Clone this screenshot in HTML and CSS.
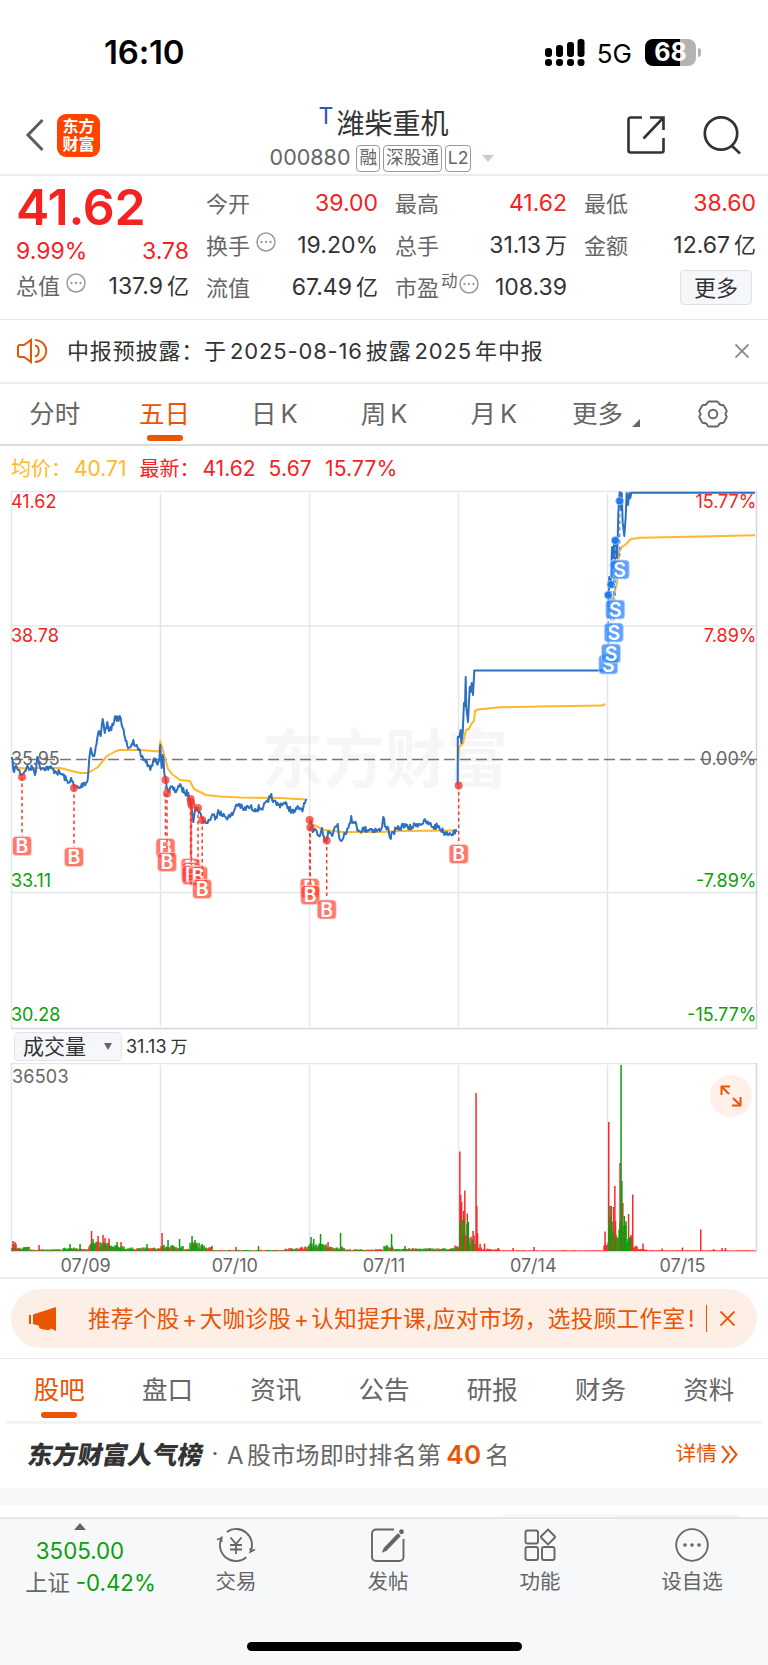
FILE: index.html
```html
<!DOCTYPE html>
<html lang="zh-CN">
<head>
    <meta charset="UTF-8">
    <meta name="viewport" content="width=device-width, initial-scale=1.0">
    <title>潍柴重机 000880</title>
    <link rel="stylesheet" href="styles.css">
</head>
<body>
    <div class="status-bar">
        <span class="clock">16:10</span>
        <div class="status-icons">
            <svg class="signal" width="40" height="28" viewBox="0 0 40 28">
                <rect x="0" y="9" width="7" height="9" rx="3"/>
                <rect x="11" y="6" width="7" height="12" rx="3"/>
                <rect x="22" y="3" width="7" height="15" rx="3"/>
                <rect x="32.500" y="0" width="7" height="18" rx="3"/>
                <rect x="0" y="20" width="7" height="7" rx="3"/>
                <rect x="11" y="20" width="7" height="7" rx="3"/>
                <rect x="22" y="20" width="7" height="7" rx="3"/>
                <rect x="32.500" y="20" width="7" height="7" rx="3"/>
            </svg>
            <span class="network">5G</span>
            <span class="battery">68</span>
            <span class="battery-nub"></span>
        </div>
    </div>

    <header class="header">
        <div class="header-left">
            <svg width="20" height="34" viewBox="0 0 20 34" fill="none" stroke="#5c5c5c" stroke-width="3"><path d="M17.500 2 3 17l14.500 15"/></svg>
            <div class="logo"><span>东方</span><span>财富</span></div>
        </div>
        <div class="header-title">
            <div class="stock-name"><sup>T</sup>潍柴重机</div>
            <div class="stock-code">
                <span class="code">000880</span>
                <span class="tag">融</span>
                <span class="tag">深股通</span>
                <span class="tag">L2</span>
                <i class="caret"></i>
            </div>
        </div>
        <div class="header-right">
            <svg width="40" height="40" viewBox="0 0 40 40" fill="none" stroke="#333" stroke-width="2.600"><path d="M16 2.500H4.500a2 2 0 0 0-2 2v31a2 2 0 0 0 2 2h31a2 2 0 0 0 2-2V23M24 2.500h13.500V15M37 3 17.500 23.500"/></svg>
            <svg width="40" height="40" viewBox="0 0 40 40" fill="none" stroke="#333" stroke-width="2.700"><circle cx="19" cy="18.500" r="16.200"/><path d="m29.500 30.500 8.500 8"/></svg>
        </div>
    </header>

    <section class="quote">
        <div class="quote-main">
            <div class="price">41.62</div>
            <div class="cell up"><span>9.99%</span><span>3.78</span></div>
            <div class="cell"><label>总值<svg class="dots" viewBox="0 0 20 20"><use href="#more"/></svg></label><span>137.9<em>亿</em></span></div>
        </div>
        <div class="quote-grid">
            <div class="cell up"><label>今开</label><span>39.00</span></div>
            <div class="cell up"><label>最高</label><span>41.62</span></div>
            <div class="cell up"><label>最低</label><span>38.60</span></div>
            <div class="cell"><label>换手<svg class="dots" viewBox="0 0 20 20"><use href="#more"/></svg></label><span>19.20%</span></div>
            <div class="cell"><label>总手</label><span>31.13<em>万</em></span></div>
            <div class="cell"><label>金额</label><span>12.67<em>亿</em></span></div>
            <div class="cell"><label>流值</label><span>67.49<em>亿</em></span></div>
            <div class="cell"><label>市盈<small>动</small><svg class="dots tight" viewBox="0 0 20 20"><use href="#more"/></svg></label><span>108.39</span></div>
            <div class="cell last"><button class="more-button">更多</button></div>
        </div>
    </section>

    <div class="notice">
        <svg width="32" height="26" viewBox="0 0 32 26" fill="none" stroke="#ea5504" stroke-width="2"><path d="M14 2v22l-7-5H3a2 2 0 0 1-2-2V9a2 2 0 0 1 2-2h4zM18 7.500c5 1 5 10 0 11M18 2c15 1 15 21 0 22"/></svg>
        <span class="notice-text">中报预披露：于<b>2025-08-16</b>披露<b>2025</b>年中报</span>
        <svg width="14" height="14" viewBox="0 0 14 14" stroke="#888" stroke-width="1.800"><path d="m.5.5 13 13m0-13-13 13"/></svg>
    </div>

    <nav class="period-tabs">
        <a>分时</a>
        <a class="active">五日</a>
        <a>日<b>K</b></a>
        <a>周<b>K</b></a>
        <a>月<b>K</b></a>
        <a>更多<svg class="corner" width="8" height="8"><path d="M8 0v8H0z" fill="#666"/></svg></a>
        <a><svg width="30" height="28" viewBox="0 0 30 28" fill="none" stroke="#666" stroke-width="1.900" stroke-linejoin="round"><path d="M11 1.500h8q1 0 1.500 1.200c.7 1.800 1.500 2.500 3.600 2.300q1.200 0 1.800.8l2.500 4.400q.7 1.200-.2 2.200c-1 1-1 2.200 0 3.200q.9 1 .2 2.200l-2.500 4.400q-.6.9-1.800.8c-2.100-.2-2.900.5-3.600 2.300Q20 26.500 19 26.500h-8q-1 0-1.500-1.200C8.800 23.500 8 22.800 5.900 23q-1.200.1-1.800-.8l-2.500-4.400q-.7-1.200.2-2.200c1-1 1-2.200 0-3.200q-.9-1-.2-2.200l2.500-4.400Q4.700 5 5.900 5c2.100.2 2.900-.5 3.600-2.300Q10 1.500 11 1.500z"/><circle cx="15" cy="14" r="4.300"/></svg></a>
    </nav>

    <div class="legend">
        <span class="avg">均价：<b>40.71</b></span>
        <span class="now">最新：<b>41.62</b></span>
        <span class="now">5.67</span>
        <span class="now">15.77%</span>
    </div>

    <!-- price chart, filled in by chart.js -->
    <svg class="price-chart" viewBox="0 490 768 540">
        <text class="watermark" x="262" y="782" textLength="246" lengthAdjust="spacingAndGlyphs">东方财富</text>
        <path class="grid" d="M11.500 491V1028.500M160.500 494V1026M309.500 494V1026M458.500 494V1026M607.500 494V1026M11 491.500H757M11 626H757M11 892.500H757"/>
        <path class="frame" d="M756.500 491V1028.500H11"/>
        <path class="middle" d="M12 759.500H757"/>
        <g class="axis">
            <text class="up" x="11" y="508">41.62</text>
            <text class="up" x="11" y="642">38.78</text>
            <text x="11" y="765">35.95</text>
            <text class="down" x="11" y="887">33.11</text>
            <text class="down" x="11" y="1021">30.28</text>
        </g>
        <g class="axis right">
            <text class="up" x="756.500" y="508">15.77%</text>
            <text class="up" x="756.500" y="642">7.89%</text>
            <text x="756.500" y="765">0.00%</text>
            <text class="down" x="756.500" y="887">-7.89%</text>
            <text class="down" x="756.500" y="1021">-15.77%</text>
        </g>
        <g id="avgLines"></g>
        <g id="priceLines"></g>
        <g id="markers"></g>
    </svg>

    <div class="volume-bar">
        <div class="volume-select">成交量<i class="caret dark"></i></div>
        <span class="volume-value">31.13<em>万</em></span>
    </div>

    <div class="volume-wrap">
        <svg class="volume-chart" viewBox="0 1063 768 190">
            <path class="grid" d="M11.500 1063V1251M160.500 1065V1251M309.500 1065V1251M458.500 1065V1251M607.500 1065V1251M11 1063.500H757"/>
            <path class="frame" d="M756.500 1063V1251.500H11"/>
            <text class="volume-max" x="12" y="1083">36503</text>
            <g id="volumeBars"></g>
        </svg>
        <div class="expand">
            <svg width="22" height="22" viewBox="0 0 22 22" fill="none" stroke="#ea5504" stroke-width="2"><path d="M1.500 10V1.500H10M2 2l7 7M20.500 12v8.500H12M20 20l-7-7"/></svg>
        </div>
    </div>
    <div class="dates"><span>07/09</span><span>07/10</span><span>07/11</span><span>07/14</span><span>07/15</span></div>

    <div class="promo">
        <div class="banner">
            <svg width="28" height="24" viewBox="0 0 28 24" fill="#ea5504"><path d="M0 8h2v9H0zM4 7.500 27 0v24l-5-2.500q-1 2-4 1.500l-6-1q-2-1-2.500-3.500L4 17z"/></svg>
            <span class="banner-text">推荐个股<b>+</b>大咖诊股<b>+</b>认知提升课,应对市场，选投顾工作室<b>!</b></span>
            <i class="banner-line"></i>
            <svg width="15" height="15" viewBox="0 0 15 15" stroke="#ea5504" stroke-width="1.900"><path d="m.5.500 14 14m0-14-14 14"/></svg>
        </div>
    </div>

    <nav class="info-tabs">
        <a class="active">股吧</a>
        <a>盘口</a>
        <a>资讯</a>
        <a>公告</a>
        <a>研报</a>
        <a>财务</a>
        <a>资料</a>
    </nav>

    <div class="rank">
        <strong class="rank-logo">东方财富人气榜</strong>
        <span class="rank-dot">·</span>
        <span class="rank-text"><b>A</b>股市场即时排名第<b class="rank-num">40</b>名</span>
        <a class="detail">详情<svg width="17" height="19" viewBox="0 0 17 19" fill="none" stroke="#ea5504" stroke-width="2"><path d="m1 1 7 8.500L1 18M8.500 1l7 8.500-7 8.500"/></svg></a>
    </div>
    <div class="gap"></div>
    <div class="feed"><div class="feed-switch"></div></div>

    <footer class="bottom">
        <div class="bottom-nav">
            <div class="index">
                <i class="index-arrow"></i>
                <span class="down">3505.00</span>
                <span class="index-change">上证<b class="down">-0.42%</b></span>
            </div>
            <a>
                <svg width="40" height="36" viewBox="0 0 40 36" fill="none" stroke="#666" stroke-width="1.800"><path d="M10.800 4.900A16 16 0 0 1 34.500 24.800L39 22.500M34.500 25.500V21M30.300 30.300A16 16 0 0 1 5.500 11.200L1 12.500M5.500 9.500V15M14.500 10.500l5.500 6.500 5.500-6.500M20 17v10M14 18h12M14 22.500h12"/></svg>
                交易
            </a>
            <a>
                <svg width="36" height="36" viewBox="0 0 36 36" fill="none" stroke="#666" stroke-width="1.900"><path d="M24 2.500H6a4 4 0 0 0-4 4V30a4 4 0 0 0 4 4h23.500a4 4 0 0 0 4-4V12"/><path d="M28 7.500 14.500 21.500l-1 2.500 2.500-1L29.500 9z" fill="#666"/><circle cx="31.500" cy="4.800" r="1.500" fill="#666"/></svg>
                发帖
            </a>
            <a>
                <svg width="32" height="36" viewBox="0 0 32 36" fill="none" stroke="#666" stroke-width="1.900"><rect x="1.500" y="3.500" width="12.500" height="13" rx="2"/><path d="m24 2.500 6.500 6.500q1 1 0 2L24 17.500 17.500 11q-1-1 0-2z"/><rect x="1.500" y="20" width="12.500" height="13" rx="2"/><rect x="18" y="20" width="12.500" height="13" rx="2"/></svg>
                功能
            </a>
            <a>
                <svg width="36" height="36" viewBox="0 0 36 36" fill="none" stroke="#666" stroke-width="1.800"><circle cx="18" cy="18" r="15.800"/><path d="M11 18h.01M18 18h.01M25 18h.01" stroke-width="3.600" stroke-linecap="round"/></svg>
                设自选
            </a>
        </div>
        <div class="home-indicator"></div>
    </footer>

    <svg width="0" height="0" class="defs">
        <symbol id="more" viewBox="0 0 20 20">
            <circle cx="10" cy="10" r="9" fill="none" stroke="#999" stroke-width="1.500"/>
            <path d="M5.500 10h.01M10 10h.01M14.500 10h.01" stroke="#999" stroke-width="2.300" stroke-linecap="round"/>
        </symbol>
    </svg>

    <script src="chart.js"></script>
</body>
</html>
```
FILE: styles.css
```css
* {
    box-sizing: border-box;
}

body {
    margin: 0;
    width: 768px;
    height: 1665px;
    overflow: hidden;
    background: #fff;
    color: #333;
    font-family: Inter, "Noto Sans CJK SC", sans-serif;
    line-height: 1.2;
    display: flex;
    flex-direction: column;
}

body > * {
    flex-shrink: 0;
}

b, em {
    font-weight: 400;
    font-style: normal;
}

.defs {
    position: absolute;
}

/* Status bar */
.status-bar {
    height: 94px;
    padding: 11px 67px 0 104px;
    display: flex;
    justify-content: space-between;
    align-items: center;
    color: #000;
}

.clock {
    font-size: 33px;
    font-weight: 600;
    letter-spacing: -0.2px;
}

.status-icons {
    display: flex;
    align-items: center;
}

.network {
    font-size: 26px;
    margin: 2px 13px 0 12px;
}

.battery {
    width: 51px;
    height: 27px;
    border-radius: 8px;
    background: linear-gradient(90deg, #000 68%, #b3b3b3 68%);
    color: #fff;
    font-size: 25px;
    font-weight: 700;
    line-height: 27px;
    text-align: center;
}

.battery-nub {
    width: 3px;
    height: 9px;
    margin-left: 2px;
    border-radius: 0 3px 3px 0;
    background: #b3b3b3;
}

/* Header */
.header {
    height: 82px;
    padding: 0 26px 0 25px;
    border-bottom: 2px solid #ececec;
    display: grid;
    grid-template-columns: 1fr auto 1fr;
}

.header-left {
    display: flex;
    align-items: center;
    gap: 12px;
    height: 82px;
}

.logo {
    width: 43px;
    height: 43px;
    border-radius: 9px;
    background: #ff4400;
    color: #fff;
    font-size: 16px;
    font-weight: 700;
    line-height: 18px;
    display: flex;
    flex-direction: column;
    align-items: center;
    justify-content: center;
}

.header-title {
    display: flex;
    flex-direction: column;
    align-items: center;
    padding-top: 12px;
}

.stock-name {
    font-size: 28px;
    line-height: 36px;
    display: flex;
}

.stock-name sup {
    font-size: 23px;
    line-height: 20px;
    color: #2f5ba8;
    margin-right: 3px;
}

.stock-code {
    display: flex;
    align-items: center;
    gap: 3px;
    height: 32px;
    margin-right: 3px;
    color: #666;
}

.code {
    font-size: 21.500px;
    margin-right: 3px;
}

.tag {
    height: 27px;
    padding: 0 2px;
    border: 1.500px solid #999;
    border-radius: 4px;
    font-size: 17.700px;
    line-height: 24px;
    letter-spacing: -0.1px;
}

.caret {
    border: 6.500px solid transparent;
    border-top: 7px solid #ccc;
    border-bottom: 0;
    margin-left: 8px;
}

.header-right {
    display: flex;
    align-items: center;
    justify-content: flex-end;
    gap: 36px;
    height: 82px;
}

/* Quote */
.quote {
    height: 144px;
    padding: 7px 12px 0 16px;
    border-bottom: 1px solid #e2e4ec;
    display: flex;
    gap: 17px;
    font-size: 22px;
}

.quote-main {
    width: 173px;
}

.price {
    height: 52px;
    margin-top: -2px;
    font-size: 50px;
    font-weight: 600;
    line-height: 52px;
    letter-spacing: -0.2px;
    color: #f52222;
}

.quote-main .cell {
    height: 33px;
    margin-top: 2px;
}

.quote-grid {
    flex: 1;
    display: grid;
    grid-template-columns: repeat(3, 172px);
    grid-auto-rows: 42px;
    column-gap: 17px;
}

.cell {
    display: flex;
    justify-content: space-between;
    align-items: center;
    white-space: nowrap;
}

.cell span {
    font-size: 23px;
}

.cell label {
    display: flex;
    align-items: center;
    color: #666;
}

.cell em {
    margin-left: 4px;
    font-size: 22px;
}

.cell small {
    font-size: 16.500px;
    margin: -13px 0 0 2px;
}

.dots {
    width: 20px;
    height: 20px;
    margin: -7px 0 0 6px;
}

.dots.tight {
    margin-left: 1px;
}

.up span {
    color: #f52222;
}

.cell.last {
    justify-content: flex-end;
}

.more-button {
    width: 72px;
    height: 35px;
    margin: -1px 4px 0 0;
    padding: 0;
    border: 1.500px solid #dfe1e8;
    border-radius: 4px;
    background: #f6f7fa;
    color: #333;
    font: 22px/32px Inter, "Noto Sans CJK SC", sans-serif;
}

/* Notice */
.notice {
    height: 64px;
    padding: 0 19px 0 17px;
    border-bottom: 2px solid #ececec;
    display: flex;
    align-items: center;
    font-size: 22px;
}

.notice-text {
    flex: 1;
    margin-left: 18px;
    letter-spacing: 0.850px;
}

.notice-text b {
    margin: 0 3px;
}

/* Period tabs */
.period-tabs {
    height: 62px;
    border-bottom: 2px solid #dadce2;
    display: flex;
}

.period-tabs a,
.info-tabs a {
    flex: 1;
    position: relative;
    display: flex;
    align-items: center;
    justify-content: center;
    font-size: 25.500px;
    color: #666;
}

.period-tabs b {
    margin-left: 4px;
}

.corner {
    margin: 18px -5px 0 9px;
}

.period-tabs .active,
.info-tabs .active {
    color: #ea5504;
}

.active::after {
    content: "";
    position: absolute;
    left: 50%;
    bottom: 3px;
    width: 36px;
    height: 6px;
    margin-left: -18px;
    border-radius: 3px;
    background: #ea5504;
}

.legend {
    height: 46px;
    margin-bottom: -2px;
    padding-left: 11px;
    display: flex;
    align-items: center;
    gap: 13px;
    font-size: 20px;
}

.legend b {
    margin-left: 3px;
}

.legend b,
.now {
    font-size: 21px;
}

.now:nth-child(2) {
    font-size: 20px;
}

.now:nth-child(n+3) {
    letter-spacing: 0.200px;
}

.avg {
    color: #ffb72c;
}

.now {
    color: #f52222;
}

/* Charts */
.price-chart {
    width: 768px;
    height: 540px;
    display: block;
}

.grid {
    stroke: #e3e6ef;
    stroke-width: 1.500;
}

.frame {
    fill: none;
    stroke: #d2d6e0;
    stroke-width: 1.500;
}

.middle {
    stroke: #777;
    stroke-width: 1.300;
    stroke-dasharray: 11 5;
}

.watermark {
    font-size: 64px;
    font-weight: 700;
    fill: #f6f6f6;
}

.axis text,
.volume-max {
    font-size: 18px;
    fill: #666;
}

.volume-max {
    letter-spacing: 0.200px;
}

.axis.right {
    text-anchor: end;
}

.axis .up {
    fill: #f52222;
}

.axis .down {
    fill: #0a9f0a;
}

.price-line,
.avg-line {
    fill: none;
    stroke: #2c70be;
    stroke-width: 2;
    stroke-linejoin: round;
}

.avg-line {
    stroke: #ffb72c;
}

.marker line {
    stroke: #ff3b30;
    stroke-width: 1.500;
    stroke-dasharray: 3.500 3;
}

.marker circle {
    fill: #f0352b;
    fill-opacity: 0.75;
}

.marker rect {
    fill: #ff3f2e;
    fill-opacity: 0.7;
    stroke: #ffd0cb;
    stroke-width: 0.800;
}

.marker text {
    font-size: 19.500px;
    font-weight: 600;
    fill: #fff;
    text-anchor: middle;
}

.marker.sell line {
    stroke: #5b9bfa;
}

.marker.sell circle {
    fill: #1f78f0;
    fill-opacity: 1;
    stroke: #bcd7ff;
    stroke-width: 0.700;
}

.marker.sell rect {
    fill: #2b83ff;
    fill-opacity: 0.75;
    stroke: #c6dcff;
}

.volume-bar {
    height: 33px;
    padding-left: 14px;
    display: flex;
    align-items: center;
    gap: 4px;
    font-size: 18px;
}

.volume-bar em {
    margin-left: 4px;
    font-size: 17px;
}

.volume-select {
    width: 108px;
    height: 29px;
    padding: 0 9px 0 8px;
    border: 1.500px solid #e2e4ea;
    border-radius: 4px;
    background: #f6f7fa;
    display: flex;
    align-items: center;
    justify-content: space-between;
    font-size: 21px;
    line-height: 25px;
}

.caret.dark {
    border-width: 7px 4px 0;
    border-top-color: #666;
}

.volume-wrap {
    position: relative;
    height: 190px;
}

.volume-chart {
    width: 768px;
    height: 190px;
    display: block;
}

.expand {
    position: absolute;
    top: 12px;
    right: 16px;
    width: 42px;
    height: 42px;
    border-radius: 50%;
    background: #fff1e9;
    display: flex;
    align-items: center;
    justify-content: center;
}

.dates {
    height: 26px;
    padding: 0 11px;
    border-bottom: 2px solid #eeeeee;
    display: flex;
    font-size: 18px;
    line-height: 26px;
    color: #666;
}

.dates span {
    flex: 1;
    text-align: center;
}

/* Promo banner */
.promo {
    height: 80px;
    padding: 10px 11px;
    border-bottom: 1px solid #e8e8e8;
}

.banner {
    height: 59px;
    padding: 0 22px 0 18px;
    border-radius: 30px;
    background: #fdeee6;
    color: #ea5504;
    display: flex;
    align-items: center;
    font-size: 22.500px;
    white-space: nowrap;
}

.banner-text {
    margin-left: 31px;
    flex: 1;
    letter-spacing: 0.450px;
}

.banner-text b {
    margin: 0 2px 0 2.500px;
}

.banner-line {
    width: 1.500px;
    height: 27px;
    margin-right: 13px;
    background: #ea5504;
}

/* Info tabs */
.info-tabs {
    height: 65px;
    margin: 0 5px;
    border-bottom: 3px solid #f3f3f3;
    display: flex;
}

.rank {
    height: 64px;
    padding: 0 30px 3px 28px;
    display: flex;
    align-items: center;
    font-size: 24px;
    color: #666;
    white-space: nowrap;
}

.rank-logo {
    font-size: 25px;
    font-weight: 900;
    color: #333;
    transform: skewX(-10deg);
}

.rank-dot {
    width: 24px;
    text-align: center;
}

.rank-text {
    letter-spacing: 0.300px;
}

.rank-text b {
    margin-right: 3px;
}

.rank-text .rank-num {
    margin: 0 4px 0 5px;
    font-size: 26px;
    font-weight: 600;
    color: #ea5504;
}

.detail {
    margin-left: auto;
    display: flex;
    align-items: center;
    gap: 4px;
    font-size: 20.800px;
    color: #ea5504;
}

.gap {
    height: 17px;
    background: #f7f8fa;
}

.feed {
    height: 12px;
    padding: 10px 30px 0 501px;
}

.feed-switch {
    height: 2px;
    border-top: 1px solid #f0f0f2;
    border-radius: 4px 4px 0 0;
    background: linear-gradient(90deg, #fff 115px, #f6f7fa 115px);
}

/* Bottom bar */
.bottom {
    height: 150px;
    border-top: 2px solid #e4e6ea;
    background: #f7f8fa;
}

.bottom-nav {
    height: 123px;
    padding-left: 4px;
    display: flex;
    color: #666;
}

.bottom-nav a {
    width: 152px;
    padding-top: 8px;
    display: flex;
    flex-direction: column;
    align-items: center;
    gap: 4px;
    font-size: 20.500px;
    line-height: 30px;
}

.index {
    width: 156px;
    padding: 4px 4px 0 0;
    display: flex;
    flex-direction: column;
    align-items: center;
    font-size: 22.300px;
    line-height: 32px;
    white-space: nowrap;
}

.index-arrow {
    border: 6.500px solid transparent;
    border-bottom: 7px solid #666;
    border-top: 0;
    margin-bottom: 5px;
}

.index-change {
    padding-left: 21px;
}

.index b {
    margin-left: 6px;
}

.bottom-nav .down {
    color: #0a9f0a;
}

.home-indicator {
    width: 275px;
    height: 9px;
    margin: 0 auto;
    border-radius: 5px;
    background: #000;
}
```
FILE: chart.js
```js
const priceData = [
    // 07/09 - 07/10
    [[11.7,757],[13.3,770],[16.7,767],[22,775],[26.7,767],[30,769],[33.3,768],[35,775],[37.3,757],[40,767],[50,768],[55,771],[63,775],[68,783],[71,778],[74,787],[80,788],[83.3,783],[86,783],[87.7,780],[89.3,758],[90.7,748],[92.7,756],[95,752],[97.3,738],[99,731],[100.7,736],[102.7,719],[104.7,733],[107.3,722],[109.3,731],[113.3,725],[115.7,716],[116.7,721],[119.7,716],[122.7,728],[125,738],[127.3,746],[131.7,744],[133.3,740],[135,746],[138.3,750],[141.7,757],[145,760],[148.3,765],[150.3,770],[153.3,760],[156.7,763],[159.3,760],[160.3,745],[161.7,768],[162.7,755],[165,777],[168.3,792],[171.7,787],[175,792],[178.3,786],[181.7,788],[185,793],[188.3,793],[191.7,808],[193.3,822],[195,810],[198,808],[201.7,818],[206,823],[209.3,820],[213.3,815],[216,817],[218.3,810],[222.7,816],[230,817],[233.3,813],[236,805],[238.7,804],[243.3,810],[248.3,807],[255,809],[263.3,807],[268.3,802],[271.3,794],[273.3,802],[278.3,805],[283.3,803],[288.3,807],[293.3,813],[296.7,809],[303.3,808],[306.7,799]],
    // 07/11
    [[309.7,820],[312.7,832],[316.7,831],[320,836],[322,828],[324,837],[326.7,840],[328.3,831],[332.3,836],[334.7,827],[337.7,824],[339.3,838],[341.3,841],[344.3,833],[348.3,828],[351.3,816],[352.7,823],[354.7,823],[358.3,830],[370,829],[380,831],[382,827],[383.3,817],[385.7,827],[388.3,828],[390,838],[393.3,832],[400,828],[404.7,824],[408.3,829],[416.7,824],[426,822],[433.3,827],[438.3,826],[443.3,832],[450,833],[456.7,832]]
];

// limit-up days are drawn without the minute noise
const limitUp = [
    [[457.7,785],[457.8,737],[459.3,737],[460.7,730],[461.3,743],[462.7,733],[464,703],[465,706],[465.7,677],[466.3,707],[468,722],[469.7,687],[470.7,692],[471.7,683],[473,695],[474.3,670.5],[604,670.5]],
    [[608.3,607],[609.3,577],[610.7,587],[612,547],[613.3,558],[614.3,538],[615.2,560],[616,540],[617,558],[617.8,535],[618.3,513],[619.7,492],[620.5,510],[621.7,493],[622.7,523],[624.3,536],[625.7,517],[626.7,493],[628,505],[629.3,493],[630.3,498],[631.3,492.7],[755,492.7]]
];

const avgData = [
    [[12,767],[30,769],[38,768],[60,768],[72,771],[80,773],[88,773],[98,767],[107,756],[116,751],[120,750],[140,750],[159,751.5],[160.3,741],[165,758],[168,769],[172,774],[180,780],[190,781],[194,789],[206,795],[220,796.5],[240,797.5],[280,798],[306,799.5]],
    [[311,824],[316,826],[324,830],[342,832],[380,832],[400,831],[457,830.5]],
    [[458,765],[459,747],[463,743],[466,730],[469,729],[472,723],[474,721],[475,711],[478,709.5],[500,707.3],[540,706.5],[602,705.6],[605.5,704]],
    [[608.5,612],[613,598],[617,583],[619,552],[622,547],[626,544],[631,539],[640,537.7],[700,536.5],[755,535.3]]
];

// x, dot y, badge y
const buys = [[22,777,846],[74,788,857],[165.5,780,848],[167,793.5,862],[190.5,799,868],[191,802,872],[191.5,805,875],[198,808,876],[202.2,820,889],[309.7,820,888],[310.3,827.5,895],[326.7,840.5,909.5],[458.7,785.5,854]];
const sells = [[608.3,595,664.5],[611,584.5,653.5],[613.8,565,632.5],[615.3,540.5,609.5],[619.7,501,569.5]];

// from x, to x, typical height, share of red bars
const volumeRanges = [[12,17,6,.6],[17,30,4,.3],[30,63,1.5,.3],[63,78,3,.3],[78,89,2.5,.4],[89,110,8,.5],[110,125,5,.2],[125,150,3,.3],[150,161,3,.7],[161,184,5,.2],[184,190,2,.5],[190,200,8,.2],[200,213,5,.5],[213,285,1,.5],[285,300,2.5,.4],[300,309,4,.8],[309,324,7,.2],[324,330,6,.6],[330,345,4,.4],[345,384,1.5,.6],[384,393,5,.4],[393,455,2.5,.3],[455,460,5,.7],[460,468,28,.35],[468,476,16,.4],[476,482,6,1],[482,500,2,1],[500,604,.7,1],[604,609,8,1],[609,613,32,.3],[613,619,18,.3],[619,627,26,.3],[627,633,15,.3],[633,638,5,.9],[638,648,2,1],[648,756,.7,1]];
const spikes = [[13,10,'r'],[15,9,'r'],[39,6,'r'],[70,7,'g'],[80,7,'g'],[91.5,20,'r'],[93,12,'g'],[98,15,'r'],[103,16,'r'],[105,13,'r'],[109,12.5,'r'],[117,9,'g'],[121,9,'r'],[147,7,'g'],[162,18,'r'],[168,11,'g'],[179.5,12,'g'],[192,15,'g'],[195,11,'g'],[202,7,'g'],[236,4,'r'],[258.5,5,'g'],[311,14,'g'],[313.7,12,'g'],[320.5,17,'g'],[328,9,'r'],[340.5,18,'g'],[391.5,17,'g'],[405,5,'g'],[459.8,99.5,'r'],[460.7,56,'r'],[461.6,49,'r'],[463.6,40,'r'],[464.8,60.5,'r'],[467.3,37.5,'r'],[468.3,29,'g'],[473,20,'r'],[476,158,'r'],[476.8,45,'r'],[477.5,18,'r'],[484.5,7.5,'r'],[498,3,'r'],[513,3,'r'],[534,4,'r'],[605,19.5,'r'],[608.7,129,'r'],[610,45,'g'],[611.2,45,'r'],[613.5,44,'r'],[614.8,65,'r'],[615.5,30,'r'],[620,88,'r'],[621,186,'g'],[621.8,70,'g'],[622.8,48,'r'],[624.3,35,'g'],[625.5,26,'g'],[628.5,37,'r'],[631,16,'r'],[632.7,56.5,'r'],[643,7.5,'r'],[662,2.5,'r'],[682.5,3.5,'r'],[700.7,21.5,'r'],[713.5,2,'r'],[722,3,'r'],[725.5,3,'r']];

// small seeded generator so that every load draws the same chart
let seed = 7;
function rand() {
    seed = (seed * 16807) % 2147483647;
    return seed / 2147483647;
}

function addNoise(points, amount) {
    const out = [];
    for (let i = 0; i < points.length - 1; i++) {
        const [x1, y1] = points[i];
        const [x2, y2] = points[i + 1];
        const steps = Math.max(1, Math.round((x2 - x1) / 0.9));
        for (let s = 0; s < steps; s++) {
            const t = s / steps;
            const shift = s === 0 ? 0 : (rand() - 0.5) * amount;
            out.push([x1 + (x2 - x1) * t, y1 + (y2 - y1) * t + shift]);
        }
    }
    out.push(points[points.length - 1]);
    return out;
}

function polyline(points, cls) {
    const list = points.map(p => p[0].toFixed(1) + ',' + p[1].toFixed(1)).join(' ');
    return `<polyline class="${cls}" points="${list}"/>`;
}

function marker([x, dot, badge], letter, cls) {
    return `<g class="marker ${cls}">
        <line x1="${x}" y1="${dot}" x2="${x}" y2="${badge - 10}"/>
        <circle cx="${x}" cy="${dot}" r="4"/>
        <rect x="${x - 9.5}" y="${badge - 9.5}" width="19" height="19" rx="3.5"/>
        <text x="${x}" y="${badge + 7}">${letter}</text>
    </g>`;
}

function bar(x, h, color) {
    const fill = color === 'r' ? '#f82a2a' : '#0a9f0a';
    return `<rect x="${x - 0.7}" y="${1251 - h}" width="1.5" height="${h}" fill="${fill}"/>`;
}

document.getElementById('avgLines').innerHTML = avgData.map(p => polyline(p, 'avg-line')).join('');
document.getElementById('priceLines').innerHTML =
    priceData.map(p => polyline(addNoise(p, 6.5), 'price-line')).join('') +
    limitUp.map(p => polyline(p, 'price-line')).join('');
document.getElementById('markers').innerHTML =
    buys.map(b => marker(b, 'B', 'buy')).join('') +
    sells.map(s => marker(s, 'S', 'sell')).join('');

let bars = spikes.filter(s => s[2] === 'r').map(s => bar(...s)).join('');
volumeRanges.forEach(([from, to, height, red]) => {
    for (let x = from; x < to; x += 1) {
        bars += bar(x, height * (0.45 + rand() * 0.75), rand() < red ? 'r' : 'g');
    }
});
bars += spikes.filter(s => s[2] === 'g').map(s => bar(...s)).join('');
document.getElementById('volumeBars').innerHTML = bars;
```
